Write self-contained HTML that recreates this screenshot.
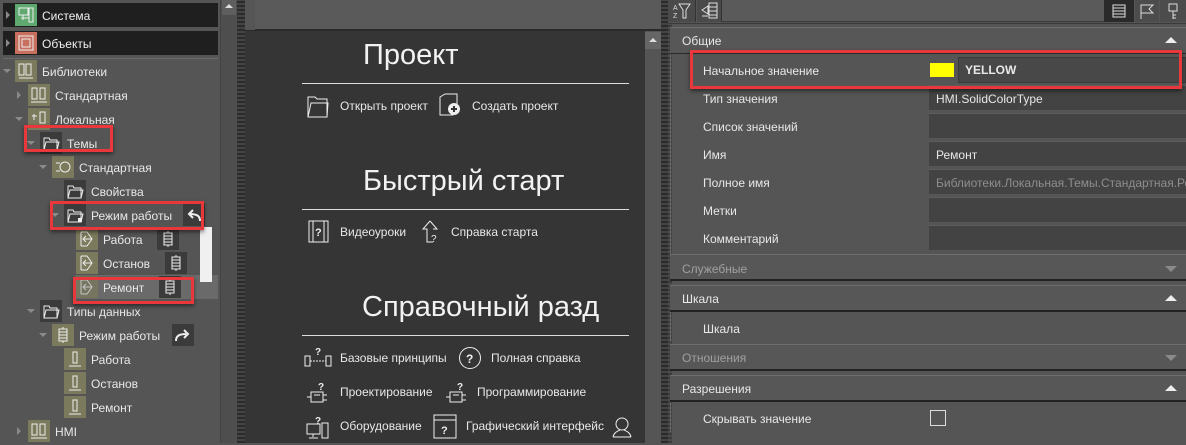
<!DOCTYPE html>
<html><head><meta charset="utf-8"><style>
*{margin:0;padding:0;box-sizing:border-box}
body{width:1186px;height:443px;overflow:hidden;background:#555;font-family:"Liberation Sans","DejaVu Sans",sans-serif;font-size:12px;color:#e8e8e8;position:relative}
.a{position:absolute}
.t{position:absolute;white-space:nowrap;line-height:14px}
.ic{position:absolute;width:22px;height:22px;background:#7b7a5c}
.icd{position:absolute;width:22px;height:22px;background:#3b3b3b}
.arr{position:absolute;width:0;height:0;border-left:4px solid transparent;border-right:4px solid transparent;border-top:4px solid #8a8a8a}
.arrr{position:absolute;width:0;height:0;border-top:4px solid transparent;border-bottom:4px solid transparent;border-left:4px solid #8a8a8a}
.red{position:absolute;border:3px solid #e8383c;box-shadow:0 2px 4px rgba(0,0,0,.5)}
.hatch{background:repeating-linear-gradient(0deg,#2b2b2b 0 2px,#444 2px 4px)}
.sec{position:absolute;left:670px;width:516px;height:27px;background:#575757;border-top:1px solid #6e6e6e;border-bottom:2px solid #222}
.vb{position:absolute;left:929px;width:257px;height:25px;background:#434343;border-top:1px solid #5c5c5c}
.up{position:absolute;width:0;height:0;border-left:6px solid transparent;border-right:6px solid transparent;border-bottom:6px solid #eee}
.dn{position:absolute;width:0;height:0;border-left:6px solid transparent;border-right:6px solid transparent;border-top:6px solid #8a8a8a}
.st{stroke:#eee;fill:none;stroke-width:1}
.h{position:absolute;white-space:nowrap;font-size:29px;line-height:34px;color:#f2f2f2}
</style></head><body>

<!-- left panel -->
<div class="a" style="left:3px;top:3px;width:215px;height:24px;background:#1f1f1f"></div>
<div class="a" style="left:3px;top:31px;width:215px;height:24px;background:#1f1f1f"></div>
<div class="a" style="left:3px;top:58px;width:215px;height:1px;background:#6a6a6a"></div>
<div class="arrr" style="left:6px;top:11px"></div>
<div class="arrr" style="left:6px;top:39px"></div>
<div class="a" style="left:15px;top:4px;width:22px;height:22px;background:#5fa86f"><svg width="22" height="22"><rect x="4" y="4" width="9" height="7" class="st"/><rect x="14" y="4" width="4" height="14" class="st"/><path d="M6 14h8M8 11v5" class="st"/></svg></div>
<div class="t" style="left:42px;top:9px;color:#f0f0f0">Система</div>
<div class="a" style="left:15px;top:32px;width:22px;height:22px;background:#c8705f"><svg width="22" height="22"><rect x="4" y="4" width="14" height="14" class="st"/><rect x="7" y="7" width="8" height="8" class="st"/></svg></div>
<div class="t" style="left:42px;top:37px;color:#f0f0f0">Объекты</div>

<div class="arr" style="left:3px;top:69px"></div>
<div class="ic" style="left:15px;top:60px"><svg width="22" height="22"><rect x="4" y="4" width="5" height="11" class="st"/><rect x="11" y="4" width="5" height="11" class="st"/><path d="M4 18h14" class="st"/></svg></div>
<div class="t" style="left:42px;top:65px">Библиотеки</div>
<div class="arrr" style="left:17px;top:91px"></div>
<div class="ic" style="left:28px;top:84px"><svg width="22" height="22"><rect x="4" y="4" width="5" height="11" class="st"/><rect x="12" y="4" width="5" height="11" class="st"/><path d="M3 18h16" class="st"/></svg></div>
<div class="t" style="left:55px;top:89px">Стандартная</div>
<div class="arr" style="left:15px;top:117px"></div>
<div class="ic" style="left:28px;top:108px"><svg width="22" height="22"><rect x="12" y="4" width="5" height="11" class="st"/><path d="M4 8h5M6 6v6M3 18h16" class="st"/></svg></div>
<div class="t" style="left:55px;top:113px">Локальная</div>
<div class="arr" style="left:27px;top:141px"></div>
<div class="icd" style="left:40px;top:132px"><svg width="22" height="22"><path d="M4 18V6h5l1 2h7v10zM4 18l2-8h13l-2 8" class="st"/></svg></div>
<div class="t" style="left:67px;top:137px">Темы</div>
<div class="arr" style="left:39px;top:165px"></div>
<div class="ic" style="left:52px;top:156px"><svg width="22" height="22"><circle cx="13" cy="11" r="5" class="st"/><path d="M4 7h4M4 15h4" class="st"/></svg></div>
<div class="t" style="left:79px;top:161px">Стандартная</div>
<div class="icd" style="left:64px;top:180px"><svg width="22" height="22"><path d="M4 18V6h5l1 2h7v10zM4 18l2-8h13l-2 8" class="st"/></svg></div>
<div class="t" style="left:91px;top:185px">Свойства</div>
<div class="arr" style="left:51px;top:213px"></div>
<div class="icd" style="left:64px;top:204px"><svg width="22" height="22"><path d="M4 18V6h5l1 2h7v10zM4 18l2-8h13l-2 8" class="st"/><rect x="14" y="14" width="4" height="4" fill="#eee"/></svg></div>
<div class="t" style="left:91px;top:209px">Режим работы</div>
<div class="icd" style="left:183px;top:204px"><svg width="22" height="22"><path d="M17 17c0-5-3-7-10-7M10 6l-4 4 4 4" stroke="#eee" stroke-width="2" fill="none"/></svg></div>

<div class="a" style="left:75px;top:275px;width:143px;height:24px;background:#6a6a6a"></div>
<div class="a" style="left:200px;top:227px;width:12px;height:55px;background:#f0f0f0"></div>
<div class="ic" style="left:76px;top:228px"><svg width="22" height="22"><path d="M5 4v14M5 4h6l5 7-5 7H5M8 11h8M10 8l-3 3 3 3" class="st"/></svg></div>
<div class="t" style="left:103px;top:233px">Работа</div>
<div class="icd" style="left:157px;top:228px"><svg width="22" height="22"><rect x="7" y="5" width="8" height="12" class="st"/><path d="M7 8h8M7 11h8M7 14h8M11 3v2M11 17v2" class="st"/></svg></div>
<div class="ic" style="left:76px;top:252px"><svg width="22" height="22"><path d="M5 4v14M5 4h6l5 7-5 7H5M8 11h8M10 8l-3 3 3 3" class="st"/></svg></div>
<div class="t" style="left:103px;top:257px">Останов</div>
<div class="icd" style="left:165px;top:252px"><svg width="22" height="22"><rect x="7" y="5" width="8" height="12" class="st"/><path d="M7 8h8M7 11h8M7 14h8M11 3v2M11 17v2" class="st"/></svg></div>
<div class="ic" style="left:76px;top:276px;opacity:.7"><svg width="22" height="22"><path d="M5 4v14M5 4h6l5 7-5 7H5M8 11h8M10 8l-3 3 3 3" class="st"/></svg></div>
<div class="t" style="left:103px;top:281px">Ремонт</div>
<div class="icd" style="left:159px;top:276px"><svg width="22" height="22"><rect x="7" y="5" width="8" height="12" class="st"/><path d="M7 8h8M7 11h8M7 14h8M11 3v2M11 17v2" class="st"/></svg></div>

<div class="arr" style="left:27px;top:309px"></div>
<div class="icd" style="left:40px;top:300px"><svg width="22" height="22"><path d="M4 18V6h5l1 2h7v10zM4 18l2-8h13l-2 8" class="st"/></svg></div>
<div class="t" style="left:67px;top:305px">Типы данных</div>
<div class="arr" style="left:39px;top:333px"></div>
<div class="ic" style="left:52px;top:324px"><svg width="22" height="22"><rect x="7" y="5" width="8" height="12" class="st"/><path d="M7 8h8M7 11h8M7 14h8M11 3v2M11 17v2" class="st"/></svg></div>
<div class="t" style="left:79px;top:329px">Режим работы</div>
<div class="icd" style="left:172px;top:324px"><svg width="22" height="22"><path d="M4 17c0-5 3-7 10-7M12 6l4 4-4 4" stroke="#eee" stroke-width="2" fill="none"/></svg></div>
<div class="ic" style="left:64px;top:348px"><svg width="22" height="22"><rect x="9" y="4" width="4" height="11" class="st"/><path d="M5 18h12" class="st"/></svg></div>
<div class="t" style="left:91px;top:353px">Работа</div>
<div class="ic" style="left:64px;top:372px"><svg width="22" height="22"><rect x="9" y="4" width="4" height="11" class="st"/><path d="M5 18h12" class="st"/></svg></div>
<div class="t" style="left:91px;top:377px">Останов</div>
<div class="ic" style="left:64px;top:396px"><svg width="22" height="22"><rect x="9" y="4" width="4" height="11" class="st"/><path d="M5 18h12" class="st"/></svg></div>
<div class="t" style="left:91px;top:401px">Ремонт</div>
<div class="arrr" style="left:17px;top:427px"></div>
<div class="ic" style="left:28px;top:420px"><svg width="22" height="22"><rect x="4" y="4" width="5" height="11" class="st"/><rect x="12" y="4" width="5" height="11" class="st"/><path d="M3 18h16" class="st"/></svg></div>
<div class="t" style="left:55px;top:425px">HMI</div>

<div class="red" style="left:24px;top:125px;width:89px;height:27px"></div>
<div class="red" style="left:50px;top:201px;width:154px;height:29px"></div>
<div class="red" style="left:73px;top:277px;width:121px;height:27px"></div>

<!-- left scrollbar -->
<div class="a" style="left:220px;top:0;width:17px;height:443px;background:#4e4e4e;border-left:1px solid #444"></div>
<div class="a" style="left:222px;top:0;width:14px;height:15px;background:#5e5e5e"></div>
<div class="a" style="left:225px;top:4px;border-left:4px solid transparent;border-right:4px solid transparent;border-bottom:4px solid #ddd"></div>
<div class="a hatch" style="left:237px;top:0;width:8px;height:443px"></div>

<!-- center -->
<div class="a" style="left:245px;top:0;width:417px;height:31px;background:#5a5a5a;border-bottom:2px solid #2a2a2a"></div>
<div class="a" style="left:245px;top:0;width:10px;height:30px;background:#555"></div>
<div class="a" style="left:245px;top:31px;width:400px;height:412px;background:#353535"></div>
<div class="a" style="left:645px;top:31px;width:16px;height:412px;background:#555"></div>
<div class="a" style="left:645px;top:32px;width:16px;height:17px;background:#666"></div>
<div class="a" style="left:649px;top:38px;border-left:4px solid transparent;border-right:4px solid transparent;border-bottom:4px solid #ddd"></div>
<div class="a hatch" style="left:661px;top:0;width:7px;height:443px"></div>

<div class="h" style="left:363px;top:38px">Проект</div>
<div class="a" style="left:302px;top:83px;width:327px;height:1px;background:#ddd"></div>
<svg class="a" style="left:306px;top:93px" width="24" height="25"><path d="M2 24V4h7l2 2h10v18zM2 24l3-14h17l-1 14" class="st"/></svg>
<div class="t" style="left:340px;top:99px">Открыть проект</div>
<svg class="a" style="left:439px;top:93px" width="24" height="25"><path d="M1 4l5-3h12v15l-4 6H1z" class="st"/><circle cx="15" cy="16" r="6" fill="#eee"/><path d="M12 16h6M15 13v6" stroke="#333" stroke-width="2"/></svg>
<div class="t" style="left:472px;top:99px">Создать проект</div>

<div class="h" style="left:363px;top:164px">Быстрый старт</div>
<div class="a" style="left:302px;top:209px;width:327px;height:1px;background:#ddd"></div>
<svg class="a" style="left:308px;top:220px" width="22" height="23"><rect x="1" y="1" width="19" height="21" class="st"/><path d="M5 1v21M16 1v21" class="st"/><text x="7" y="16" fill="#eee" font-size="11" font-weight="bold" font-family="Liberation Sans">?</text></svg>
<div class="t" style="left:340px;top:225px">Видеоуроки</div>
<svg class="a" style="left:421px;top:220px" width="18" height="24"><path d="M9 1L2 9h4v13h6" class="st"/><path d="M9 1l7 8h-4" class="st"/><text x="10" y="22" fill="#eee" font-size="10" font-family="Liberation Sans">?</text></svg>
<div class="t" style="left:451px;top:225px">Справка старта</div>

<div class="h" style="left:362px;top:290px">Справочный разд</div>
<div class="a" style="left:302px;top:335px;width:327px;height:1px;background:#ddd"></div>
<svg class="a" style="left:304px;top:346px" width="28" height="22"><rect x="1" y="10" width="5" height="10" class="st"/><rect x="22" y="10" width="5" height="10" class="st"/><path d="M6 15h16" class="st" stroke-dasharray="2 1"/><text x="11" y="9" fill="#eee" font-size="10" font-weight="bold" font-family="Liberation Sans">?</text></svg>
<div class="t" style="left:340px;top:351px">Базовые принципы</div>
<svg class="a" style="left:458px;top:346px" width="24" height="24"><circle cx="12" cy="12" r="10.5" class="st"/><text x="8" y="17" fill="#eee" font-size="12" font-weight="bold" font-family="Liberation Sans">?</text></svg>
<div class="t" style="left:491px;top:351px">Полная справка</div>
<svg class="a" style="left:306px;top:380px" width="24" height="24"><rect x="5" y="12" width="12" height="10" class="st"/><path d="M1 17h4M17 15h4M17 20h4M8 15h6" class="st"/><text x="12" y="10" fill="#eee" font-size="10" font-weight="bold" font-family="Liberation Sans">?</text></svg>
<div class="t" style="left:340px;top:385px">Проектирование</div>
<svg class="a" style="left:445px;top:380px" width="24" height="24"><rect x="5" y="12" width="12" height="10" class="st"/><path d="M1 17h4M17 15h4M17 20h4M8 15h6" class="st"/><text x="12" y="10" fill="#eee" font-size="10" font-weight="bold" font-family="Liberation Sans">?</text></svg>
<div class="t" style="left:477px;top:385px">Программирование</div>
<svg class="a" style="left:306px;top:414px" width="24" height="25"><rect x="1" y="10" width="13" height="10" class="st"/><path d="M7 20v3M3 24h9" class="st"/><rect x="16" y="9" width="6" height="15" class="st"/><text x="9" y="10" fill="#eee" font-size="10" font-weight="bold" font-family="Liberation Sans">?</text></svg>
<div class="t" style="left:340px;top:419px">Оборудование</div>
<svg class="a" style="left:433px;top:414px" width="24" height="25"><rect x="1" y="1" width="22" height="23" class="st"/><path d="M1 6h22" class="st"/><text x="8" y="20" fill="#eee" font-size="11" font-weight="bold" font-family="Liberation Sans">?</text></svg>
<div class="t" style="left:466px;top:419px">Графический интерфейс</div>
<svg class="a" style="left:612px;top:416px" width="20" height="22"><circle cx="10" cy="8" r="6" class="st"/><path d="M1 21c1-5 5-6 7-7M19 21c-1-5-5-6-7-7M1 21h18" class="st"/></svg>

<!-- right panel -->
<div class="a" style="left:668px;top:0;width:518px;height:24px;background:#555;border-bottom:1px solid #3a3a3a"></div>
<div class="a" style="left:668px;top:0;width:28px;height:22px;background:#4a4a4a;border-right:1px solid #333"></div>
<svg class="a" style="left:672px;top:2px" width="20" height="18"><text x="1" y="8" fill="#ddd" font-size="7" font-family="Liberation Sans">A</text><text x="1" y="16" fill="#ddd" font-size="7" font-family="Liberation Sans">Z</text><path d="M7 2h11l-4 6v8h-3V8z" stroke="#ddd" fill="none"/></svg>
<div class="a" style="left:697px;top:0;width:25px;height:22px;background:#4a4a4a;border-right:1px solid #333"></div>
<svg class="a" style="left:700px;top:2px" width="20" height="18"><rect x="9" y="1" width="8" height="15" stroke="#ddd" fill="none"/><path d="M9 5h8M9 9h8M9 13h8M2 8l6-4v8zM2 14h6" stroke="#ddd" fill="none"/></svg>
<div class="a" style="left:722px;top:0;width:385px;height:22px;background:#5a5a5a;border-bottom:1px solid #3a3a3a"></div>
<div class="a" style="left:1104px;top:0;width:30px;height:22px;background:#2a2a2a"></div>
<svg class="a" style="left:1111px;top:3px" width="16" height="16"><path d="M2 2h12v12H2zM2 5h12M2 8h12M2 11h12" stroke="#ddd" fill="none"/></svg>
<div class="a" style="left:1135px;top:0;width:24px;height:22px;background:#4c4c4c"></div>
<svg class="a" style="left:1138px;top:3px" width="18" height="17"><path d="M3 16V2h12l-4 4 4 4H3" stroke="#ddd" fill="none"/></svg>
<div class="a" style="left:1160px;top:0;width:26px;height:22px;background:#4c4c4c"></div>
<svg class="a" style="left:1166px;top:3px" width="14" height="17"><rect x="3" y="1" width="8" height="7" stroke="#ddd" fill="none"/><path d="M7 8v8M7 12h3M7 15h3" stroke="#ddd" fill="none"/></svg>

<div class="a hatch" style="left:668px;top:24px;width:4px;height:419px;opacity:.6"></div>
<div class="a" style="left:670px;top:27px;width:516px;height:27px;background:#575757;border-top:1px solid #6e6e6e;border-bottom:1px solid #2a2a2a"></div>
<div class="t" style="left:682px;top:34px">Общие</div>
<div class="up" style="left:1165px;top:37px"></div>
<div class="a" style="left:670px;top:54px;width:1px;height:200px;background:#6a6a6a"></div>

<div class="t" style="left:703px;top:64px">Начальное значение</div>
<div class="a" style="left:930px;top:63px;width:24px;height:14px;background:#ffff00"></div>
<div class="a" style="left:958px;top:57px;width:228px;height:26px;background:#484848;border:1px solid #3a3a3a"></div>
<div class="t" style="left:965px;top:63px;font-weight:bold">YELLOW</div>
<div class="t" style="left:703px;top:92px">Тип значения</div>
<div class="vb" style="top:85px"></div>
<div class="t" style="left:936px;top:92px">HMI.SolidColorType</div>
<div class="t" style="left:703px;top:120px">Список значений</div>
<div class="vb" style="top:113px"></div>
<div class="t" style="left:703px;top:148px">Имя</div>
<div class="vb" style="top:141px"></div>
<div class="t" style="left:936px;top:148px">Ремонт</div>
<div class="t" style="left:703px;top:176px">Полное имя</div>
<div class="vb" style="top:169px"></div>
<div class="t" style="left:936px;top:176px;color:#8e8e8e">Библиотеки.Локальная.Темы.Стандартная.Ре</div>
<div class="t" style="left:703px;top:204px">Метки</div>
<div class="vb" style="top:197px"></div>
<div class="t" style="left:703px;top:232px">Комментарий</div>
<div class="vb" style="top:225px"></div>

<div class="sec" style="top:254px"></div>
<div class="t" style="left:682px;top:262px;color:#a0a0a0">Служебные</div>
<div class="dn" style="left:1165px;top:266px"></div>
<div class="sec" style="top:285px"></div>
<div class="t" style="left:682px;top:292px">Шкала</div>
<div class="up" style="left:1165px;top:295px"></div>
<div class="t" style="left:703px;top:322px">Шкала</div>
<div class="a" style="left:670px;top:312px;width:1px;height:30px;background:#6a6a6a"></div>
<div class="sec" style="top:344px"></div>
<div class="t" style="left:682px;top:351px;color:#a0a0a0">Отношения</div>
<div class="dn" style="left:1165px;top:355px"></div>
<div class="sec" style="top:375px"></div>
<div class="t" style="left:682px;top:382px">Разрешения</div>
<div class="up" style="left:1165px;top:385px"></div>
<div class="t" style="left:703px;top:412px">Скрывать значение</div>
<div class="a" style="left:930px;top:410px;width:16px;height:16px;border:1px solid #ddd"></div>
<div class="a" style="left:670px;top:402px;width:1px;height:30px;background:#6a6a6a"></div>

<div class="red" style="left:690px;top:50px;width:492px;height:39px"></div>
</body></html>
